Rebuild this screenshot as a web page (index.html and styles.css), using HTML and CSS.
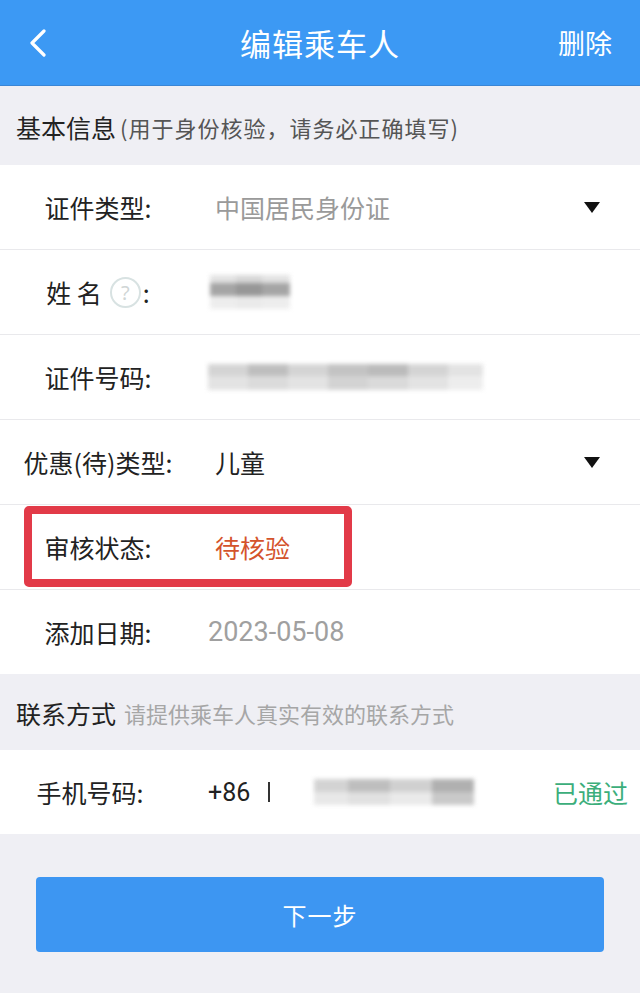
FILE: index.html
```html
<!DOCTYPE html>
<html lang="zh-CN">
<head>
<meta charset="utf-8">
<title>编辑乘车人</title>
<link rel="stylesheet" href="styles.css">
</head>
<body>
<div class="page">
  <header class="topbar">
    <div class="back">
      <svg width="20" height="28" viewBox="0 0 20 28"><path d="M16 2 L4 14 L16 26" fill="none" stroke="#fff" stroke-width="3.2" stroke-linecap="round" stroke-linejoin="round"/></svg>
    </div>
    <div class="title">编辑乘车人</div>
    <div class="action">删除</div>
  </header>

  <div class="section-head">
    <span class="sh-title">基本信息</span><span class="sh-sub">(用于身份核验，请务必正确填写)</span>
  </div>

  <div class="group">
    <div class="row">
      <div class="label">证件类型:</div>
      <div class="value muted">中国居民身份证</div>
      <div class="caret"></div>
    </div>
    <div class="row">
      <div class="label">姓 名<span class="help">?</span>:</div>
      <div class="value"><div class="blur blur-name"><i></i><i></i><i></i></div></div>
    </div>
    <div class="row">
      <div class="label">证件号码:</div>
      <div class="value"><div class="blur blur-id"><i></i><i></i><i></i><i></i><i></i><i></i><i></i></div></div>
    </div>
    <div class="row">
      <div class="label">优惠(待)类型:</div>
      <div class="value">儿童</div>
      <div class="caret"></div>
    </div>
    <div class="row row-marked">
      <div class="label">审核状态:</div>
      <div class="value pending">待核验</div>
      <div class="mark"></div>
    </div>
    <div class="row">
      <div class="label">添加日期:</div>
      <div class="value muted date">2023-05-08</div>
    </div>
  </div>

  <div class="section-head second">
    <span class="sh-title">联系方式</span><span class="sh-sub light">请提供乘车人真实有效的联系方式</span>
  </div>

  <div class="group">
    <div class="row phone-row">
      <div class="label phone-label">手机号码:</div>
      <div class="cc">+86</div>
      <div class="sep"></div>
      <div class="phone-val"><div class="blur blur-phone"><i></i><i></i><i></i><i></i></div></div>
      <div class="passed">已通过</div>
    </div>
  </div>

  <div class="btn-wrap">
    <div class="btn">下一步</div>
  </div>
</div>
</body>
</html>
```
FILE: styles.css
```css
* { box-sizing: border-box; }
html, body { margin: 0; padding: 0; }
body {
  width: 640px;
  height: 993px;
  background: #efeff4;
  font-family: "Noto Sans CJK SC", "Noto Sans", sans-serif;
  color: #222;
  overflow: hidden;
}
.page { display: flex; flex-direction: column; }

.topbar {
  height: 86px;
  background: #3c99f4;
  display: flex;
  align-items: center;
  position: relative;
  border-bottom: 1px solid #3a86d6;
}
.back { width: 100px; padding-left: 28px; display: flex; align-items: center; height: 100%; }
.title {
  flex: 1;
  text-align: center;
  color: #fff;
  font-size: 31px;
  letter-spacing: 1px;
}
.action {
  width: 100px;
  text-align: right;
  padding-right: 28px;
  color: #fff;
  font-size: 27px;
}

.section-head {
  height: 79px;
  display: flex;
  align-items: center;
  padding-left: 16px;
  padding-top: 2px;
}
.section-head.second { height: 76px; }
.sh-title { font-size: 25px; color: #222; }
.sh-sub { font-size: 22px; color: #555; margin-left: 4px; letter-spacing: 1px; }
.sh-sub.light { color: #a6a6a6; letter-spacing: 0; margin-left: 8px; }

.group { background: #fff; }
.row {
  height: 85px;
  display: flex;
  align-items: center;
  position: relative;
  border-top: 1px solid #e9e9ec;
}
.row:first-child { border-top: none; height: 84px; }
.label {
  width: 176px;
  padding-left: 20px;
  text-align: center;
  font-size: 25px;
  color: #222;
  display: flex;
  justify-content: center;
  align-items: center;
  white-space: nowrap;
}
.help {
  display: inline-flex;
  align-items: center;
  justify-content: center;
  width: 31px;
  height: 31px;
  border: 2px solid #d8e2e2;
  border-radius: 50%;
  color: #d0d6d6;
  font-size: 20px;
  margin-left: 8px;
  margin-right: 2px;
  font-family: "Noto Sans", sans-serif;
}
.value {
  flex: 1;
  padding-left: 39px;
  font-size: 25px;
  color: #222;
}
.value.muted { color: #9a9a9a; }
.value.date { padding-left: 32px; font-family: "Roboto", "Noto Sans", sans-serif; font-size: 27px; color: #a0a0a0; }
.value.pending { color: #d4532c; }
.caret {
  width: 0;
  height: 0;
  border-left: 8px solid transparent;
  border-right: 8px solid transparent;
  border-top: 11px solid #111;
  margin-right: 40px;
}

.mark {
  position: absolute;
  left: 24px;
  top: 1px;
  width: 328px;
  height: 81px;
  border: 8px solid #e23a48;
  border-radius: 5px;
  pointer-events: none;
}

.blur { display: flex; filter: blur(2px); opacity: 0.9; }
.blur i { display: block; height: 26px; }
.blur-name { margin-left: -5px; }
.blur-name i { width: 26px; height: 34px; background: linear-gradient(#e0e0e0 25%, #9c9c9c 25%, #9c9c9c 62%, #ececec 62%); }
.blur-name i:nth-child(2) { background: linear-gradient(#d4d4d4 25%, #8c8c8c 25%, #8c8c8c 62%, #e8e8e8 62%); }
.blur-name i:nth-child(3) { width: 28px; }
.blur-id { margin-left: -7px; }
.blur-id i { width: 40px; background: linear-gradient(#d0d0d0 45%, #e0e0e0 45%); }
.blur-id i:nth-child(2) { background: linear-gradient(#b8b8b8 45%, #d8d8d8 45%); }
.blur-id i:nth-child(4) { background: linear-gradient(#bdbdbd 45%, #cfcfcf 45%); }
.blur-id i:nth-child(5) { background: linear-gradient(#b4b4b4 45%, #d6d6d6 45%); }
.blur-id i:nth-child(7) { width: 35px; background: linear-gradient(#e0e0e0 45%, #ececec 45%); }

.phone-row { height: 85px; border-top: none; }
.phone-label { width: 160px; padding-left: 20px; }
.cc { margin-left: 48px; font-size: 25px; font-family: "Roboto", "Noto Sans", sans-serif; color: #222; }
.sep { width: 2px; height: 20px; background: #333; margin-left: 18px; }
.phone-val { flex: 1; padding-left: 44px; }
.blur-phone i { width: 42px; height: 26px; background: linear-gradient(#b8b8b8 50%, #dedede 50%); }
.blur-phone i:first-child { background: linear-gradient(#cfcfcf 50%, #e6e6e6 50%); width: 34px; }
.blur-phone i:nth-child(3) { background: linear-gradient(#cccccc 50%, #e8e8e8 50%); }
.blur-phone i:nth-child(4) { background: linear-gradient(#a8a8a8 50%, #c4c4c4 50%); }
.passed { font-size: 25px; color: #3cae7b; padding-right: 12px; }

.btn-wrap { padding: 43px 36px 0; }
.btn {
  height: 75px;
  background: #3d96f2;
  border-radius: 4px;
  display: flex;
  align-items: center;
  justify-content: center;
  color: #fff;
  font-size: 24px;
  letter-spacing: 1px;
}
```
